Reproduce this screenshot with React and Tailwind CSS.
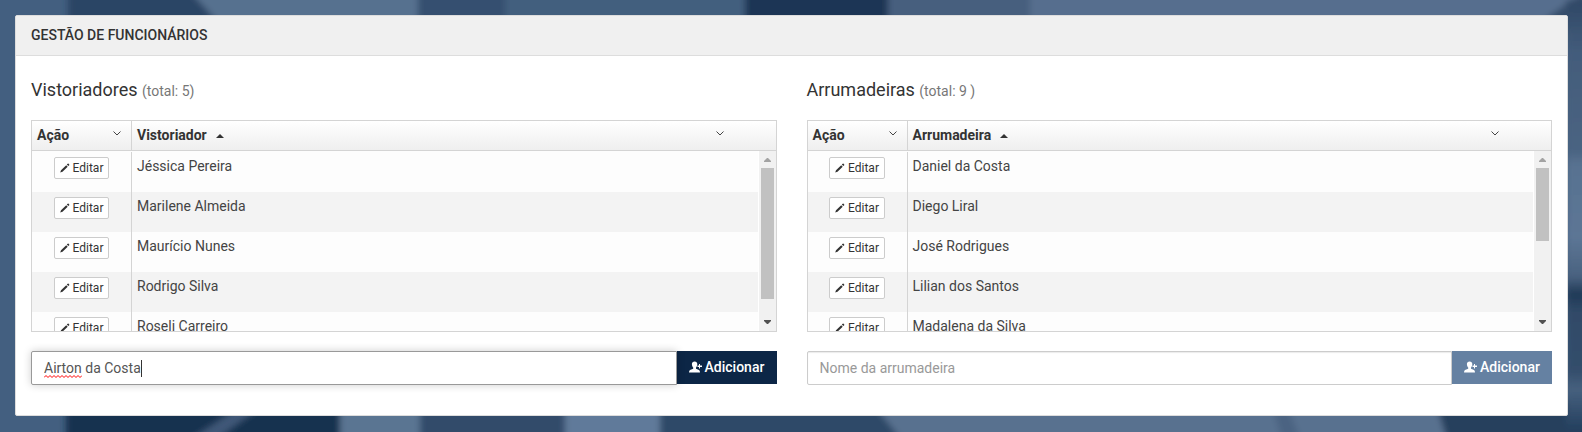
import { useState } from "react";

const teams = [
  {
    id: "vistoriador",
    title: "Vistoriadores",
    total: "(total: 5)",
    column: "Vistoriador",
    placeholder: "Nome do vistoriador",
    draft: "Airton da Costa",
    people: ["Jéssica Pereira", "Marilene Almeida", "Maurício Nunes", "Rodrigo Silva", "Roseli Carreiro"],
    thumb: 131,
  },
  {
    id: "arrumadeira",
    title: "Arrumadeiras",
    total: "(total: 9 )",
    column: "Arrumadeira",
    placeholder: "Nome da arrumadeira",
    draft: "",
    people: ["Daniel da Costa", "Diego Liral", "José Rodrigues", "Lilian dos Santos", "Madalena da Silva"],
    thumb: 73,
  },
];

const PencilIcon = () => (
  <svg viewBox="0 0 10 10" className="size-[10px] fill-[#333]" aria-hidden="true">
    <path d="M.2 9.500 1 7.200 6.200 2.200 7.700 3.700 2.500 8.700ZM6.800 1.600 7.700.8Q8.200.4 8.600.8L9.200 1.400Q9.600 1.800 9.200 2.300L8.300 3.100Z" />
  </svg>
);

const AddUserIcon = () => (
  <svg viewBox="0 0 13 12" className="h-3 w-[13px] fill-white" aria-hidden="true">
    <path d="M5.600.5C7.200.5 8.300 1.400 8.300 3 8.300 4.600 7.700 5.800 7 6.500V7.800L10 9Q11 9.500 11 11.500H0Q0 9.500 1 9L4.200 7.800V6.500C3.500 5.800 2.900 4.600 2.900 3 2.900 1.400 4 .5 5.600.5Z" />
    <path d="M10 3h1v1.500h2v1.500h-2v1.500h-1V6H8.500V4.500H10Z" />
  </svg>
);

const ChevronIcon = () => (
  <svg viewBox="0 0 8 5" className="h-[5px] w-2" fill="none" stroke="#444" aria-hidden="true">
    <path d="M.5.5 4 4 7.500.5" />
  </svg>
);

const HeaderCell = ({ label, sorted }) => (
  <div className="flex h-[29px] items-center pl-[5px]">
    <span className="pb-px">{label}</span>
    {sorted && (
      <svg viewBox="0 0 8 4" className="ml-[9px] h-1 w-2 fill-[#333]" aria-hidden="true">
        <path d="M0 4 4 0 8 4Z" />
      </svg>
    )}
    <button type="button" aria-label={`Menu ${label}`} className="mr-[10px] mb-1 ml-auto">
      <ChevronIcon />
    </button>
  </div>
);

const ScrollBar = ({ thumb }) => (
  <div className="absolute top-[30px] right-0 bottom-0 flex w-[18px] flex-col items-center border-l border-white bg-[#f1f1f1]">
    <svg viewBox="0 0 7 4" className="mt-[7px] mb-[6px] h-1 w-[7px] shrink-0 fill-[#a3a3a3]" aria-hidden="true">
      <path d="M0 4V3L3 0H4L7 3V4Z" />
    </svg>
    <div className="w-[13px] bg-[#c1c1c1]" style={{ height: thumb }} />
    <svg viewBox="0 0 7 4" className="mt-auto mb-[7px] h-1 w-[7px] shrink-0 fill-[#505050]" aria-hidden="true">
      <path d="M0 0H7V1L4 4H3L0 1Z" />
    </svg>
  </div>
);

const StaffTable = ({ column, people, thumb }) => (
  <div className="relative h-[212px] overflow-hidden border border-[#d4d4d4] bg-[#fdfdfd]">
    <table className="w-full table-fixed border-separate border-spacing-0 text-left">
      <thead className="bg-linear-to-b from-white to-[#eee]">
        <tr>
          <th className="w-[100px] border-r border-b border-[#d4d4d4] p-0">
            <HeaderCell label="Ação" />
          </th>
          <th className="border-b border-[#d4d4d4] p-0 pr-[42px]">
            <HeaderCell label={column} sorted />
          </th>
        </tr>
      </thead>
      <tbody className="before:block before:h-px">
        {people.map((name) => (
          <tr key={name} className="h-10 align-top even:bg-[#f3f3f3]">
            <td className="border-r border-[#d4d4d4] p-0 pt-[5px]">
              <button
                type="button"
                className="mx-auto flex h-[22px] items-center gap-[3px] rounded-[2px] border border-[#ccc] bg-white px-[5px] text-xs text-[#333]"
              >
                <PencilIcon />
                Editar
              </button>
            </td>
            <td className="p-0 pt-1 pl-[5px] text-[#444]">{name}</td>
          </tr>
        ))}
      </tbody>
    </table>
    <ScrollBar thumb={thumb} />
  </div>
);

const AddForm = ({ id, placeholder, draft }) => {
  const [name, setName] = useState(draft);
  const active = name !== "";

  return (
    <form className="mt-[19px] flex items-start" onSubmit={(e) => e.preventDefault()}>
      <div className="relative flex-1">
        <input
          id={id}
          aria-label={placeholder}
          placeholder={placeholder}
          value={name}
          onChange={(e) => setName(e.target.value)}
          className={`block h-[34px] w-full rounded-l-[2px] border bg-white px-3 text-[#555] outline-none placeholder:text-[#999] ${
            active ? "border-[#999] shadow-[0_0_8px_rgba(0,0,0,0.2)]" : "border-[#ccc] shadow-[inset_0_1px_1px_rgba(0,0,0,0.08)]"
          }`}
        />
        {active && (
          <div className="pointer-events-none absolute inset-y-0 left-[13px]">
            <svg viewBox="0 0 38 3" className="mt-6 h-[3px] w-[38px]" fill="none" stroke="#f00" aria-hidden="true">
              <path d="M0 2.500 2 .5 4 2.500 6 .5 8 2.500 10 .5 12 2.500 14 .5 16 2.500 18 .5 20 2.500 22 .5 24 2.500 26 .5 28 2.500 30 .5 32 2.500 34 .5 36 2.500 38 .5" />
            </svg>
            <div className="absolute top-[9px] left-[97px] h-[17px] w-px bg-[#333]" />
          </div>
        )}
      </div>
      <button
        type="submit"
        disabled={!active}
        className="flex h-[33px] w-[100px] items-center justify-center gap-[3px] bg-[#0c2646] pb-px font-medium text-white disabled:bg-[#6581a2]"
      >
        <AddUserIcon />
        Adicionar
      </button>
    </form>
  );
};

const Backdrop = () => (
  <svg
    viewBox="0 0 1582 432"
    preserveAspectRatio="none"
    className="absolute inset-0 -z-10 h-full w-full"
    aria-hidden="true"
  >
    <defs>
      <filter id="soft" x="-5%" y="-5%" width="110%" height="110%">
        <feGaussianBlur stdDeviation="3" />
      </filter>
      <linearGradient id="edge" x1="0" y1="0" x2="0" y2="1">
        <stop offset="0" stopColor="#2f4866" />
        <stop offset="0.12" stopColor="#435c7b" />
        <stop offset="0.35" stopColor="#4a6482" />
        <stop offset="0.38" stopColor="#587291" />
        <stop offset="0.55" stopColor="#5c7695" />
        <stop offset="0.64" stopColor="#4a6280" />
        <stop offset="0.68" stopColor="#1f3956" />
        <stop offset="0.72" stopColor="#304a68" />
        <stop offset="0.86" stopColor="#344e6c" />
        <stop offset="0.9" stopColor="#47617f" />
        <stop offset="1" stopColor="#223e5d" />
      </linearGradient>
    </defs>
    <rect width="1582" height="432" fill="#435f80" />
    <g filter="url(#soft)">
      <path d="M68-20H195L240 30H68Z" fill="#2a4465" />
      <path d="M180-20L225 30H420V-20Z" fill="#57718f" />
      <path d="M418-20H505V30H418Z" fill="#354f70" />
      <path d="M505-20H745V30H505Z" fill="#435e7e" />
      <path d="M745-20H888V30H745Z" fill="#1b3554" />
      <path d="M888-20H1030V30H888Z" fill="#465f7e" />
      <path d="M1030-20H1600V30H1030Z" fill="#566e8e" />
      <path d="M66 400H340V450H66Z" fill="#173150" />
      <path d="M190 440 250 400H270L215 440Z" fill="#3f5878" />
      <path d="M340 400H425V450H340Z" fill="#5a7492" />
      <path d="M420 400H565V450H420Z" fill="#304b6b" />
      <path d="M565 400H660V450H565Z" fill="#607a9a" />
      <path d="M660 400H870L910 450H660Z" fill="#2e4868" />
      <path d="M870 400H1435L1450 450H910Z" fill="#59718f" />
      <path d="M1270 400H1285L1305 450H1285Z" fill="#4b6482" />
      <path d="M1435 400H1600V450H1450Z" fill="#273f5d" />
      <path d="M1600-20V30H1530Z" fill="#344d6b" />
      <path d="M1566 0H1600V432H1566Z" fill="url(#edge)" />
    </g>
  </svg>
);

const App = () => {
  return (
    <div className="relative isolate min-h-screen overflow-hidden p-[15px] pr-[14px] pb-4 font-[Roboto,sans-serif] text-sm leading-5 text-[#333]">
      <Backdrop />
      <main className="rounded-[2px] border border-[#ddd] bg-white">
        <header className="border-b border-[#ddd] bg-[#f0f0f0] px-[15px] pt-[9px] pb-[10px]">
          <h1 className="font-medium">GESTÃO DE FUNCIONÁRIOS</h1>
        </header>
        <div className="grid grid-cols-2 gap-[30px] px-[15px] pt-[22px] pb-[30px]">
          {teams.map((team) => (
            <section key={team.id}>
              <h2 className="mb-[18px] text-lg leading-6">
                {team.title} <small className="text-sm text-[#777]">{team.total}</small>
              </h2>
              <StaffTable column={team.column} people={team.people} thumb={team.thumb} />
              <AddForm id={team.id} placeholder={team.placeholder} draft={team.draft} />
            </section>
          ))}
        </div>
      </main>
    </div>
  );
};

export default App;
